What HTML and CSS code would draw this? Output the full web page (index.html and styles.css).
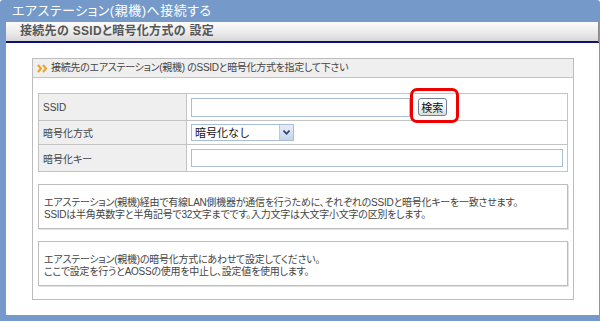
FILE: index.html
```html
<!DOCTYPE html>
<html lang="ja">
  <head>
    <meta charset="UTF-8" />
    <meta name="viewport" content="width=device-width, initial-scale=1.0" />
    <title>エアステーション(親機)へ接続する</title>
    <link rel="stylesheet" href="styles.css">
  </head>
  <body>
    <div class="window">
      <div class="title-bar">エアステーション(親機)へ接続する</div>
      <div class="main">
        <div class="sub-title">接続先の SSIDと暗号化方式の 設定</div>
        <div class="content">
          <div class="panel">
            <div class="panel-head">
              <svg class="arrow-icon" width="11" height="9" viewBox="0 0 11 9">
                <path d="M1 1 L4 4.5 L1 8" fill="none" stroke="#f0a020" stroke-width="2" />
                <path d="M6 1 L9 4.5 L6 8" fill="none" stroke="#f0a020" stroke-width="2" />
              </svg>
              接続先のエアステーション(親機) のSSIDと暗号化方式を指定して下さい
            </div>
            <div class="panel-body">
              <table class="settings">
                <tr class="row-ssid">
                  <th>SSID</th>
                  <td>
                    <input type="text" class="ssid-input" />
                    <span class="search-wrap">
                      <button class="search-btn">検索</button>
                      <span class="highlight"></span>
                    </span>
                  </td>
                </tr>
                <tr class="row-enc">
                  <th>暗号化方式</th>
                  <td>
                    <span class="select-box">
                      <select class="enc-select">
                        <option>暗号化なし</option>
                      </select>
                      <span class="select-arrow">
                        <svg width="7" height="5" viewBox="0 0 7 5">
                          <path d="M0.5 0.5 L3.5 3.8 L6.5 0.5" fill="none" stroke="#2b3f66" stroke-width="1.6" />
                        </svg>
                      </span>
                    </span>
                  </td>
                </tr>
                <tr class="row-key">
                  <th>暗号化キー</th>
                  <td><input type="text" class="key-input" /></td>
                </tr>
              </table>

              <div class="note note-first">
                エアステーション(親機)経由で有線LAN側機器が通信を行うために、それぞれのSSIDと暗号化キーを一致させます。<br />
                SSIDは半角英数字と半角記号で32文字までです。入力文字は大文字小文字の区別をします。
              </div>

              <div class="note note-second">
                エアステーション(親機)の暗号化方式にあわせて設定してください。<br />
                ここで設定を行うとAOSSの使用を中止し、設定値を使用します。
              </div>
            </div>
          </div>
        </div>
      </div>
    </div>
  </body>
</html>
```

FILE: styles.css
```css
body {
  margin: 0;
  padding: 0;
  background-color: #ffffff;
  font-family: "Liberation Sans", "Noto Sans CJK JP", sans-serif;
  font-feature-settings: "palt";
  color: #333;
}
.window {
  width: 600px;
  height: 321px;
  background-color: #7599c8;
  border-radius: 3px 3px 0 0;
  box-sizing: border-box;
  padding-bottom: 6px;
  display: flex;
  flex-direction: column;
}
.title-bar {
  height: 22px;
  line-height: 22px;
  padding-left: 12px;
  color: #ffffff;
  font-size: 13px;
  letter-spacing: 0.5px;
  flex-shrink: 0;
}
.main {
  flex: 1;
  margin: 0 1px 0 6px;
  background-color: #ffffff;
  display: flex;
  flex-direction: column;
}
.sub-title {
  height: 19px;
  line-height: 19px;
  padding-left: 14px;
  font-size: 12px;
  font-weight: bold;
  letter-spacing: 0.3px;
  color: #555;
  background: linear-gradient(#fcfcfc, #e9e9e9 60%, #d6d6d6);
  border-right: 1px solid #8a8a8a;
  border-bottom: 2px solid #10107a;
}
.content {
  padding: 15px 0 0 26px;
}
.panel {
  width: 540px;
  height: 240px;
  border: 1px solid #bdbdbd;
}
.panel-head {
  height: 18px;
  line-height: 18px;
  background-color: #efefef;
  border-bottom: 1px solid #c4c4c4;
  font-size: 10px;
  letter-spacing: -0.3px;
  color: #444;
  padding-left: 4px;
  display: flex;
  align-items: center;
  gap: 3px;
}
.arrow-icon {
  flex-shrink: 0;
}
.panel-body {
  padding: 15px 5px 0 5px;
}
.settings {
  width: 530px;
  border-collapse: collapse;
  font-size: 10px;
}
.settings th,
.settings td {
  border: 1px solid #c4c4c4;
  padding: 0 4px;
}
.settings th {
  width: 139px;
  background-color: #efefef;
  font-weight: normal;
  text-align: left;
  color: #444;
}
.row-ssid th,
.row-ssid td {
  height: 26px;
}
.row-enc th,
.row-enc td {
  height: 23px;
}
.row-key th,
.row-key td {
  height: 26px;
}
.settings td {
  white-space: nowrap;
}
input[type="text"] {
  box-sizing: border-box;
  border: 1px solid #a9bdd6;
  vertical-align: middle;
  margin: 0;
  padding: 0 2px;
}
.ssid-input {
  width: 219px;
  height: 19px;
  margin-top: 1px;
}
.key-input {
  width: 372px;
  height: 18px;
}
.search-wrap {
  position: relative;
  display: inline-block;
  margin-left: 5px;
  vertical-align: middle;
}
.search-btn {
  display: block;
  width: 29px;
  height: 18px;
  padding: 0;
  font-family: "Liberation Sans", "Noto Sans CJK JP", sans-serif;
  font-size: 11px;
  color: #111;
  background: linear-gradient(#ffffff, #f1f1ec 60%, #dcdcd4);
  border: 1px solid #6e7f98;
  border-radius: 3px;
}
.highlight {
  position: absolute;
  top: -10px;
  left: -8px;
  right: -12px;
  bottom: -7px;
  border: 3px solid #ee0000;
  border-radius: 7px;
}
.select-box {
  position: relative;
  display: inline-block;
  vertical-align: middle;
}
.enc-select {
  appearance: none;
  -webkit-appearance: none;
  display: block;
  width: 103px;
  height: 17px;
  margin: 0;
  padding: 0 0 0 3px;
  border: 1px solid #a9bdd6;
  border-radius: 0;
  background-color: #ffffff;
  font-family: "Liberation Sans", "Noto Sans CJK JP", sans-serif;
  font-size: 11px;
  color: #111;
}
.select-arrow {
  position: absolute;
  top: 1px;
  right: 1px;
  width: 13px;
  height: 15px;
  background: linear-gradient(#e8eef8, #c6d4ea);
  border-left: 1px solid #b9c9e0;
  display: flex;
  align-items: center;
  justify-content: center;
}
.note {
  box-sizing: border-box;
  width: 530px;
  height: 45px;
  margin-top: 12px;
  border: 1px solid #bdbdbd;
  box-shadow: 1px 1px 0 #e2e2e2;
  font-size: 10px;
  line-height: 12px;
  letter-spacing: -0.25px;
  color: #444;
  padding: 12px 5px 0 5px;
}
```
